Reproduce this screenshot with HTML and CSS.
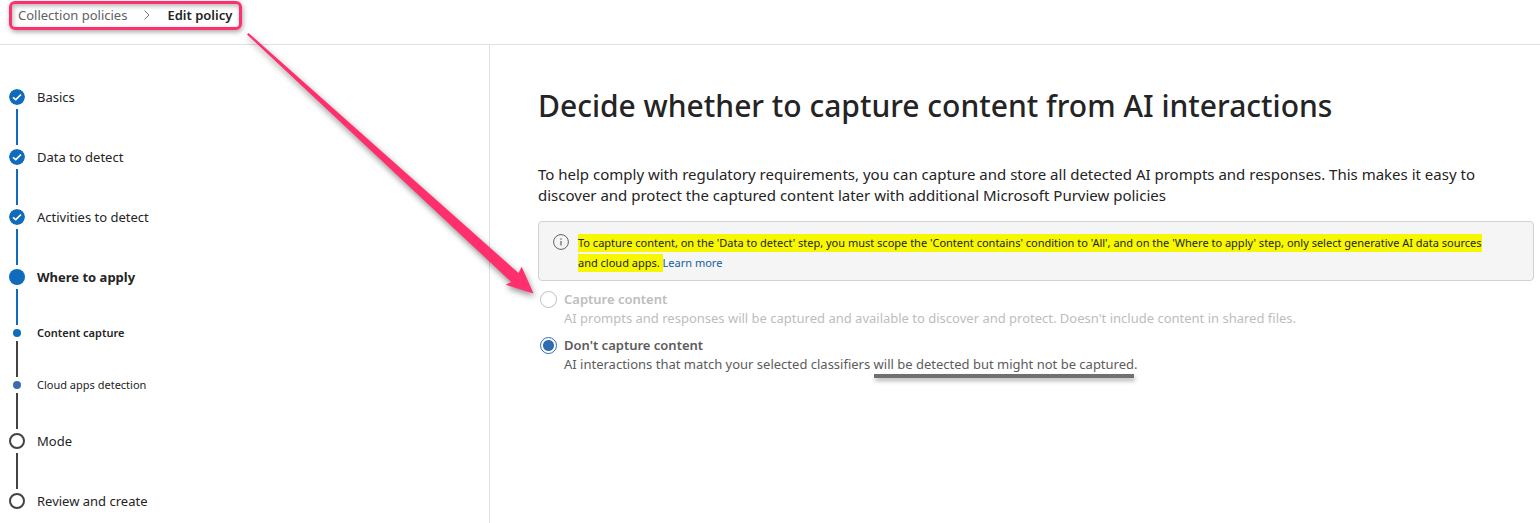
FILE: index.html
```html
<!DOCTYPE html>
<html lang="en">
<head>
<meta charset="UTF-8">
<meta name="viewport" content="width=device-width, initial-scale=1.0">
<title>Edit policy</title>
<link rel="stylesheet" href="styles.css">
</head>
<body>
<header class="topbar">
  <nav class="breadcrumb" aria-label="Breadcrumb">
    <a href="#">Collection policies</a>
    <svg class="chevron" width="8" height="12" viewBox="0 0 8 12"><path d="M1.5 1.5 6 6 1.5 10.5" fill="none" stroke="#757575"/></svg>
    <span class="current">Edit policy</span>
  </nav>
</header>
<div class="layout">
  <aside class="sidebar">
    <ol class="steps">
      <li class="step done">
        <svg class="marker" width="16" height="16" viewBox="0 0 16 16"><circle cx="8" cy="8" r="8" fill="#0f6cbd"/><path d="M4 8.3 6.8 10.7 12 5.5" fill="none" stroke="#fff" stroke-width="1.7"/></svg>
        <span class="label">Basics</span>
      </li>
      <li class="step done">
        <svg class="marker" width="16" height="16" viewBox="0 0 16 16"><circle cx="8" cy="8" r="8" fill="#0f6cbd"/><path d="M4 8.3 6.8 10.7 12 5.5" fill="none" stroke="#fff" stroke-width="1.7"/></svg>
        <span class="label">Data to detect</span>
      </li>
      <li class="step done">
        <svg class="marker" width="16" height="16" viewBox="0 0 16 16"><circle cx="8" cy="8" r="8" fill="#0f6cbd"/><path d="M4 8.3 6.8 10.7 12 5.5" fill="none" stroke="#fff" stroke-width="1.7"/></svg>
        <span class="label">Activities to detect</span>
      </li>
      <li class="step done active">
        <span class="marker filled"></span>
        <span class="label">Where to apply</span>
      </li>
      <li class="step sub active">
        <span class="marker filled"></span>
        <span class="label">Content capture</span>
      </li>
      <li class="step sub">
        <span class="marker filled muted"></span>
        <span class="label">Cloud apps detection</span>
      </li>
      <li class="step">
        <span class="marker ring"></span>
        <span class="label">Mode</span>
      </li>
      <li class="step">
        <span class="marker ring"></span>
        <span class="label">Review and create</span>
      </li>
    </ol>
  </aside>
  <main class="content">
    <h1>Decide whether to capture content from AI interactions</h1>
    <p class="intro">To help comply with regulatory requirements, you can capture and store all detected AI prompts and responses. This makes it easy to discover and protect the captured content later with additional Microsoft Purview policies</p>
    <div class="notice">
      <svg class="info" width="16" height="16" viewBox="0 0 16 16"><circle cx="8" cy="8" r="7.4" fill="none" stroke="#616161"/><path d="M8 7v4.5" stroke="#616161" stroke-width="1.2"/><circle cx="8" cy="5" r=".8" fill="#616161"/></svg>
      <p><mark>To capture content, on the 'Data to detect' step, you must scope the 'Content contains' condition to 'All', and on the 'Where to apply' step, only select generative AI data sources and cloud apps. </mark><a href="#">Learn more</a></p>
    </div>
    <form class="options">
      <div class="option disabled">
        <input type="radio" name="capture" id="capture" disabled>
        <label for="capture">Capture content</label>
        <p>AI prompts and responses will be captured and available to discover and protect. Doesn't include content in shared files.</p>
      </div>
      <div class="option">
        <input type="radio" name="capture" id="no-capture" checked>
        <label for="no-capture">Don't capture content</label>
        <p>AI interactions that match your selected classifiers <span class="underlined">will be detected but might not be captured</span>.</p>
      </div>
    </form>
  </main>
</div>
<svg class="arrow" width="310" height="280" viewBox="240 25 310 280">
  <path d="M247 34.5 248.500 33 518.500 273 521.700 266.700 533.500 293.500 505.700 284.700 511.300 282Z" fill="#ff2e6c"/>
</svg>
</body>
</html>
```

FILE: styles.css
```css
body {
    font-family: "Noto Sans", "Open Sans", sans-serif;
    font-size: 13px;
    color: #242424;
    background-color: #fff;
    margin: 0;
    min-height: 100vh;
    display: flex;
    flex-direction: column;
}
h1, p, ol {
    margin: 0;
    padding: 0;
}
a {
    color: inherit;
    text-decoration: none;
}
.topbar {
    height: 43px;
    padding: 1px 9px 0;
    border-bottom: 1px solid #e0e0e0;
    flex-shrink: 0;
}
.breadcrumb {
    display: inline-flex;
    align-items: center;
    gap: 16px;
    height: 29px;
    padding: 0 7px 2px 6px;
    box-sizing: border-box;
    border: 3px solid #ff2e6c;
    border-radius: 6px;
    color: #616161;
    box-shadow: 1px 2px 5px rgba(0, 0, 0, 0.35), inset 1px 2px 5px rgba(0, 0, 0, 0.3);
}
.breadcrumb .current {
    color: #242424;
    font-weight: 600;
}
.layout {
    display: flex;
    flex: 1;
}
.sidebar {
    flex: 0 0 480px;
    padding: 44px 0 0 9px;
    border-right: 1px solid #e0e0e0;
}
.steps {
    list-style: none;
}
.step {
    display: grid;
    grid-template-columns: 16px 1fr;
    column-gap: 12px;
    row-gap: 4px;
    justify-items: center;
    padding-bottom: 4px;
}
.step::after {
    content: "";
    width: 2px;
    height: 36px;
    background-color: #424242;
}
.step.done::after {
    background-color: #0f6cbd;
}
.step:last-child {
    padding-bottom: 0;
}
.step:last-child::after {
    display: none;
}
.marker {
    display: block;
    width: 16px;
    height: 16px;
    box-sizing: border-box;
    border-radius: 50%;
}
.filled {
    background-color: #0f6cbd;
}
.muted {
    background-color: #3a6db0;
}
.ring {
    border: 2px solid #424242;
}
.label {
    justify-self: start;
    line-height: 16px;
}
.active .label {
    font-weight: 700;
}
.sub .marker {
    width: 8px;
    height: 8px;
}
.sub .label {
    font-size: 11px;
    line-height: 8px;
}
.sub.active .label {
    font-weight: 600;
}
.content {
    flex: 1;
    min-width: 0;
    padding: 41px 6px 0 48px;
}
h1 {
    font-size: 30px;
    line-height: 40px;
    font-weight: 500;
}
.intro {
    margin-top: 38px;
    font-size: 15px;
    line-height: 21px;
}
.notice {
    display: flex;
    gap: 9px;
    margin-top: 15px;
    padding: 11px 40px 7px 14px;
    background-color: #f5f5f5;
    border: 1px solid #d1d1d1;
    border-radius: 4px;
    font-size: 11px;
    line-height: 20px;
}
.info {
    flex-shrink: 0;
    margin-top: 1px;
}
mark {
    background-color: #f7f700;
    color: #242424;
    padding: 1px 0 2px;
}
.notice a {
    color: #115ea3;
}
.options {
    margin-top: 9px;
    padding-left: 2px;
}
.option {
    display: grid;
    grid-template-columns: 17px 1fr;
    column-gap: 7px;
    margin-bottom: 8px;
    line-height: 19px;
    color: #5c5c5c;
}
.option input {
    appearance: none;
    box-sizing: border-box;
    width: 17px;
    height: 17px;
    margin: 1px 0 0;
    border: 1px solid #2f6cb0;
    border-radius: 50%;
}
.option input:checked {
    background: radial-gradient(#2f6cb0 5px, #fff 6px);
}
.option label {
    font-weight: 600;
}
.option p {
    grid-column: 2;
}
.option.disabled {
    color: #bdbdbd;
}
.option.disabled input {
    border-color: #bdbdbd;
}
.underlined {
    position: relative;
}
.underlined::after {
    content: "";
    position: absolute;
    left: 0;
    right: 0;
    bottom: -5px;
    height: 4px;
    background-color: #707070;
    box-shadow: 1px 3px 4px rgba(0, 0, 0, 0.3);
}
.arrow {
    position: absolute;
    left: 240px;
    top: 25px;
    pointer-events: none;
    filter: drop-shadow(1px 3px 3px rgba(0, 0, 0, 0.45));
}
```
